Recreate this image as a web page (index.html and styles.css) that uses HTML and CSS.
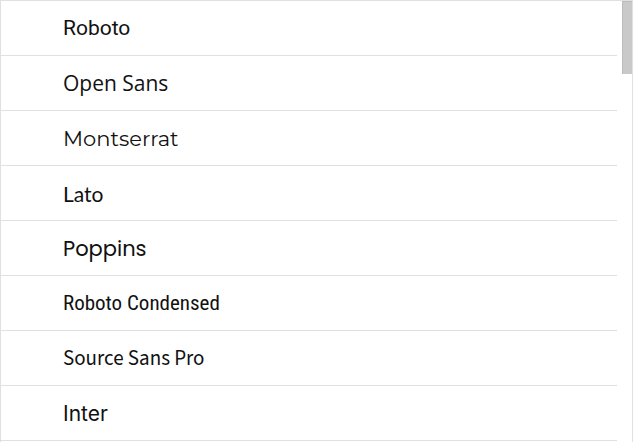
FILE: index.html
```html
<!DOCTYPE html>
<html lang="en">
<head>
<meta charset="utf-8">
<title>Font list</title>
<link rel="stylesheet" href="styles.css">
</head>
<body>
<div class="frame">
  <ul class="font-list">
    <li class="font-item f-roboto">Roboto</li>
    <li class="font-item f-opensans">Open Sans</li>
    <li class="font-item f-montserrat">Montserrat</li>
    <li class="font-item f-lato">Lato</li>
    <li class="font-item f-poppins">Poppins</li>
    <li class="font-item f-robotocond">Roboto Condensed</li>
    <li class="font-item f-sourcesans">Source Sans Pro</li>
    <li class="font-item f-inter">Inter</li>
  </ul>
  <div class="scrollbar">
    <div class="thumb"></div>
  </div>
</div>
</body>
</html>
```
FILE: styles.css
```css
html, body {
  margin: 0;
  padding: 0;
  background: #fff;
  overflow: hidden;
}

.frame {
  display: flex;
  box-sizing: border-box;
  width: 633px;
  height: 442px;
  border: 1px solid #e0e0e0;
  border-bottom: none;
}

.font-list {
  flex: 1;
  list-style: none;
  margin: 0;
  padding: 0;
  font-family: Roboto, sans-serif;
}

.font-item {
  height: 54px;
  border-bottom: 1px solid #e0e0e0;
  display: flex;
  align-items: center;
  padding-left: 62px;
  font-size: 21px;
  color: #111;
}

.scrollbar {
  width: 15px;
  box-sizing: border-box;
  padding-left: 5px;
  flex-shrink: 0;
}

.thumb {
  height: 73px;
  box-sizing: border-box;
  background: #c9c9c9;
  border-top: 1px solid #bcbcbc;
  border-left: 1px solid #bcbcbc;
}

.f-roboto { font-family: Roboto, sans-serif; }
.f-opensans { font-family: "Open Sans", sans-serif; }
.f-montserrat { font-family: Montserrat, "DejaVu Sans", sans-serif; }
.f-lato { font-family: Lato, sans-serif; }
.f-poppins { font-family: Poppins, "DejaVu Sans", sans-serif; }
.f-robotocond { font-family: "Roboto Condensed", "Liberation Sans Narrow", Roboto, sans-serif; }
.f-sourcesans { font-family: "Source Sans Pro", "Source Sans 3", Lato, sans-serif; }
.f-inter { font-family: Inter, sans-serif; }
```
